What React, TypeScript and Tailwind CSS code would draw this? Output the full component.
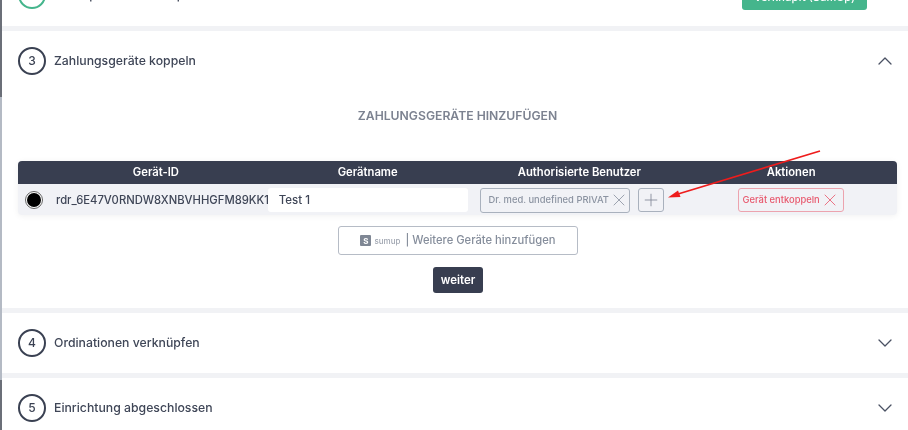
import { ChevronDown, ChevronUp, Plus, X } from "lucide-react";

function Step({ n, title, open }: { n: number; title: string; open?: boolean }) {
  return (
    <div className="flex h-[60px] items-center pl-[18px] pr-[11px]">
      <div className="flex h-[28px] w-[28px] items-center justify-center rounded-full border-2 border-[#3a4152] text-[12px] font-medium text-[#3a4152]">
        {n}
      </div>
      <div className="ml-[8px] text-[12.25px] font-medium text-[#3f4657]">{title}</div>
      {open ? (
        <ChevronUp className="ml-auto h-[24px] w-[24px] text-[#4a5163]" strokeWidth={1.3} />
      ) : (
        <ChevronDown className="ml-auto h-[24px] w-[24px] text-[#4a5163]" strokeWidth={1.3} />
      )}
    </div>
  );
}

export default function App() {
  return (
    <div className="relative h-[430px] w-[908px] overflow-hidden bg-[#f1f2f5] font-['Inter',sans-serif] blur-[0.4px]">
      <div className="ml-[2px]">
        <section className="h-[26px] overflow-hidden bg-white">
          <div className="-mt-[35px] flex h-[60px] items-center pl-[16px] pr-[41px]">
            <div className="h-[28px] w-[28px] rounded-full border-2 border-[#45b58c]" />
            <div className="ml-[8px] text-[12.25px] font-medium text-[#3f4657]">SumUp-Profil verknüpfen</div>
            <div className="ml-auto mt-[4px] flex h-[26px] w-[125px] items-center justify-center rounded-[3px] bg-[#45b58c] text-[11px] font-medium text-white">
              Verknüpft (SumUp)
            </div>
          </div>
        </section>

        <section className="mt-[5px] h-[277px] bg-white">
          <div className="-ml-[2px]">
            <Step n={3} title="Zahlungsgeräte koppeln" open />
          </div>
          <h2 className="ml-[5px] mt-[16px] text-center text-[12.2px] font-semibold text-[#7c8290]">ZAHLUNGSGERÄTE HINZUFÜGEN</h2>

          <div className="ml-[16px] mr-[11px] mt-[36px] overflow-hidden rounded-[4px] bg-[#f1f2f6] shadow-[0_1px_6px_rgba(0,0,0,0.06)]">
            <div className="grid h-[23px] grid-cols-[32px_repeat(4,minmax(0,1fr))] items-center bg-[#383e50] text-center text-[11.25px] font-semibold text-white">
              <div />
              <div>Gerät-ID</div>
              <div>Gerätname</div>
              <div>Authorisierte Benutzer</div>
              <div>Aktionen</div>
            </div>
            <div className="grid h-[31px] grid-cols-[32px_repeat(4,minmax(0,1fr))] items-center pt-[1px]">
              <div className="flex justify-center">
                <div className="flex h-[18px] w-[18px] items-center justify-center rounded-full border border-[#666] bg-white">
                  <div className="h-[14px] w-[14px] rounded-full bg-black" />
                </div>
              </div>
              <div className="whitespace-nowrap pl-[6px] text-[11.25px] font-medium text-[#3f4657]">rdr_6E47V0RNDW8XNBVHHGFM89KK1</div>
              <div className="px-[6px]">
                <div className="flex h-[24px] items-center rounded-[3px] bg-white pl-[11px] text-[11.5px] font-medium text-[#3f4657]">Test 1</div>
              </div>
              <div className="flex items-center gap-[8px] pl-[6px]">
                <div className="flex h-[25px] w-[150px] shrink-0 items-center justify-between rounded-[3px] border border-[#a9b1bd] pl-[8px] pr-[2px] text-[9.4px] font-medium text-[#8b93a1]">
                  <span className="whitespace-nowrap">Dr. med. undefined PRIVAT</span>
                  <X className="h-[20px] w-[20px] shrink-0" strokeWidth={1} />
                </div>
                <div className="flex h-[24px] w-[26px] shrink-0 items-center justify-center rounded-[3px] border border-[#a9b1bd] text-[#7d8594]">
                  <Plus className="h-[20px] w-[20px]" strokeWidth={1} />
                </div>
              </div>
              <div className="flex justify-center">
                <div className="flex h-[24px] w-[106px] items-center justify-center rounded-[3px] border border-[#eca3ae] text-[9.4px] font-medium text-[#e8596e]">
                  <span className="whitespace-nowrap">Gerät entkoppeln</span>
                  <X className="h-[20px] w-[20px] shrink-0" strokeWidth={1} />
                </div>
              </div>
            </div>
          </div>

          <div className="ml-[6px] mt-[11px] flex justify-center">
            <button className="flex h-[29px] w-[240px] items-center justify-center rounded-[3px] border border-[#b6bcc6] text-[11.2px] font-medium text-[#858d9b]">
              <span className="flex h-[11px] w-[11px] items-center justify-center rounded-[1px] bg-[#7f8794] text-[8px] font-bold leading-none text-white">S</span>
              <span className="ml-[3px] text-[8px] text-[#a0a6b1]">sumup</span>
              <span className="ml-[5px]">| Weitere Geräte hinzufügen</span>
            </button>
          </div>
          <div className="ml-[6px] mt-[12px] flex justify-center">
            <button className="flex h-[26px] w-[50px] items-center justify-center rounded-[3px] bg-[#383e50] text-[11.5px] font-semibold text-white">weiter</button>
          </div>
        </section>

        <section className="mt-[5px] bg-white">
          <div className="-ml-[2px]"><Step n={4} title="Ordinationen verknüpfen" /></div>
        </section>
        <section className="mt-[5px] h-[60px] bg-white">
          <div className="-ml-[2px]"><Step n={5} title="Einrichtung abgeschlossen" /></div>
        </section>
      </div>

      <div className="absolute left-0 top-0 h-[97px] w-[2px] bg-[#6b6f78]" />
      <div className="absolute left-0 top-[97px] h-[283px] w-[2px] bg-[#b4bac4]" />
      <div className="absolute left-0 top-[380px] h-[50px] w-[2px] bg-[#6b6f78]" />

      <svg className="absolute left-0 top-0" width="908" height="430" fill="none">
        <line x1="820" y1="151" x2="678" y2="194" stroke="#ee1c1c" strokeWidth="1.8" />
        <path d="M668 197.5 L678 190.5 L680.5 197 Z" fill="#ee1c1c" />
      </svg>
    </div>
  );
}
